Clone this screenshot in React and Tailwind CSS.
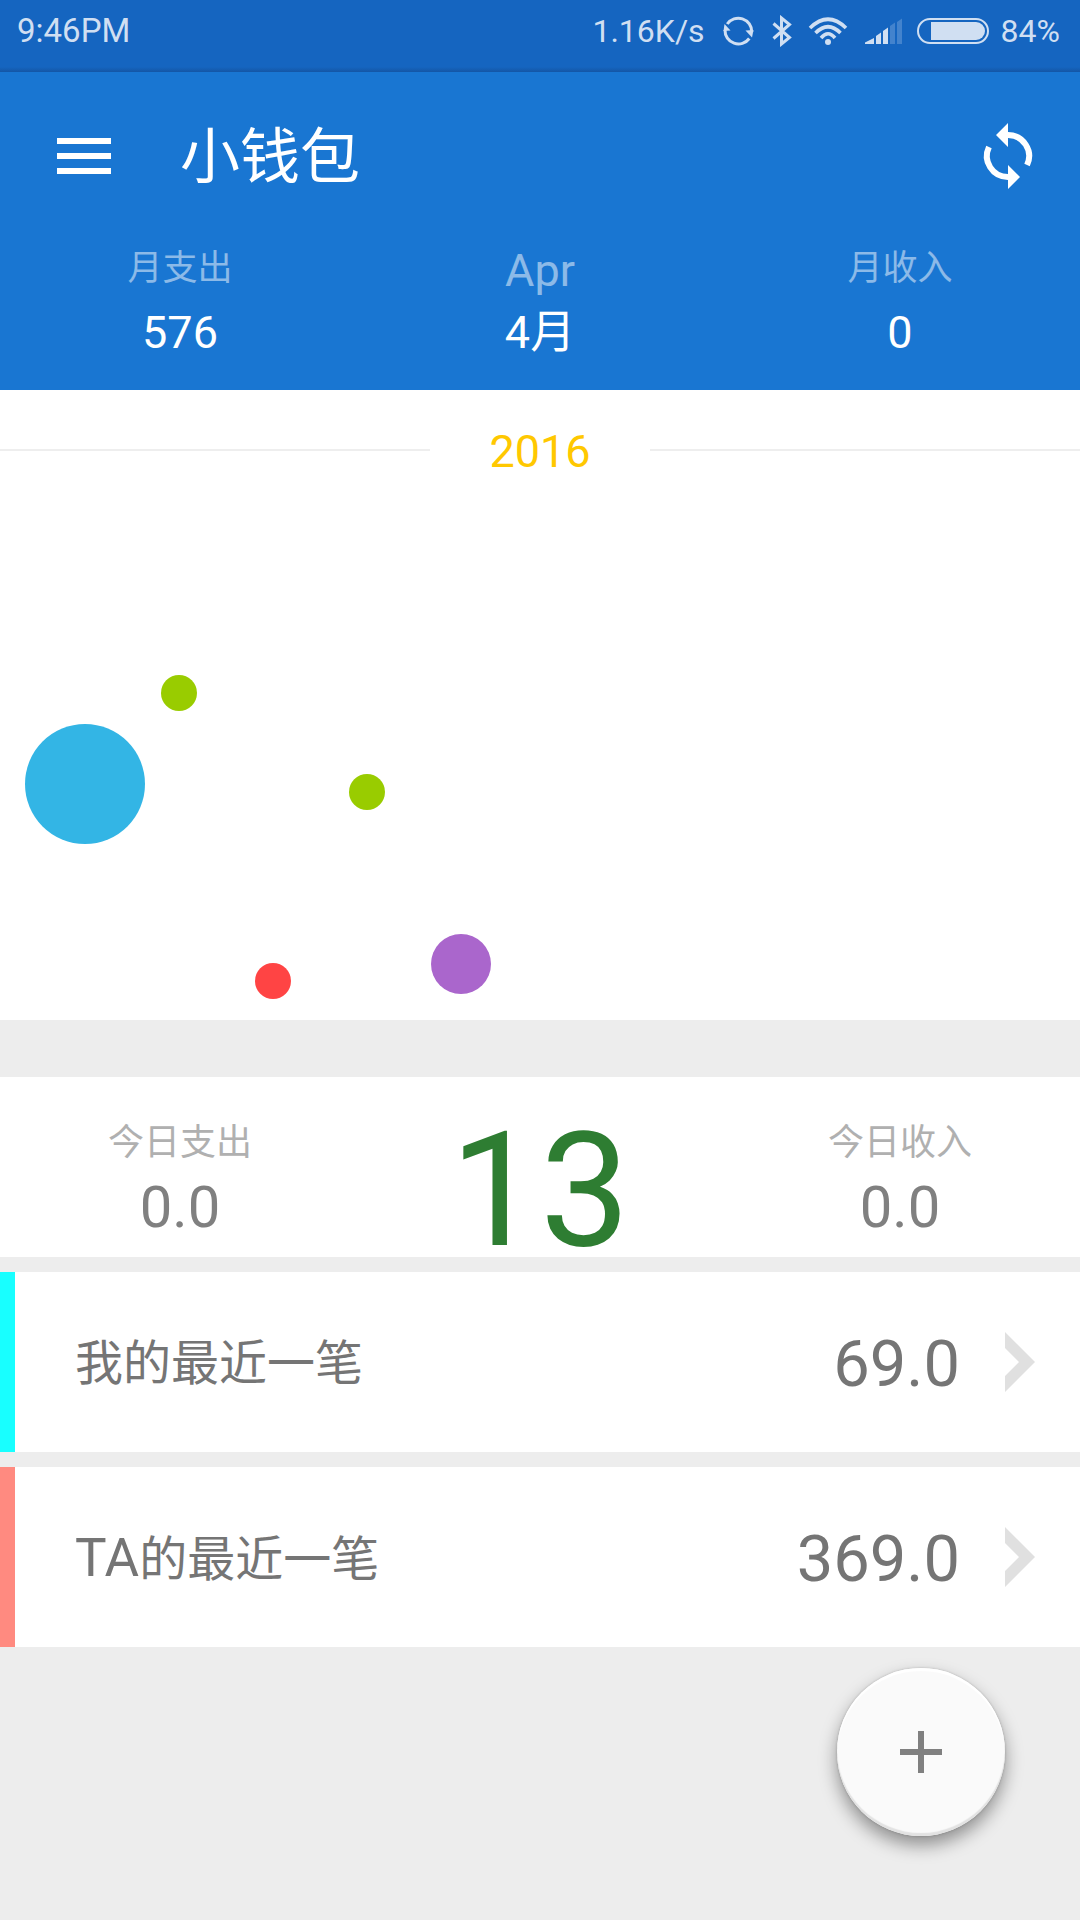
const bubbles = [
  { x: 85, y: 274, r: 60, color: "#33b5e5" },
  { x: 179, y: 183, r: 18, color: "#99cc00" },
  { x: 273, y: 471, r: 18, color: "#ff4444" },
  { x: 367, y: 282, r: 18, color: "#99cc00" },
  { x: 461, y: 454, r: 30, color: "#aa66cc" },
];

const monthStats = [
  { label: "月支出", value: "576", labelClass: "text-[35px]/[54px]" },
  { label: "Apr", value: "4月", labelClass: "text-[45px]/[54px] pt-0.5" },
  { label: "月收入", value: "0", labelClass: "text-[35px]/[54px]" },
];

const records = [
  { owner: "我", ownerClass: "text-5xl/[60px]", amount: "69.0", accent: "bg-[#18ffff]" },
  { owner: "TA", ownerClass: "text-[53px]/[60px]", amount: "369.0", accent: "bg-[#ff8a80]" },
];

function StatusSync() {
  return (
    <svg className="size-8" viewBox="0 0 32 32" fill="none" aria-hidden="true">
      <g stroke="currentColor" strokeWidth="3">
        <path d="M4.200 9A13.500 13.500 0 0 1 28.800 17" />
        <path d="M26.300 23.500A13.500 13.500 0 0 1 2 15" />
      </g>
      <path d="M22.500 15.500L30.500 15L29 22.500z" fill="currentColor" />
      <path d="M7.500 15.500L0.500 16L1.500 9z" fill="currentColor" />
    </svg>
  );
}

function Bluetooth() {
  return (
    <svg className="h-8 w-5" viewBox="0 0 20 32" fill="none" aria-hidden="true">
      <path
        d="M1.500 8.500L17.500 22.500L9.500 29V3L17.500 9.500L1.500 23.500"
        stroke="currentColor"
        strokeWidth="3"
      />
    </svg>
  );
}

function Wifi() {
  return (
    <svg className="h-7 w-10" viewBox="0 0 40 28" fill="none" aria-hidden="true">
      <g stroke="currentColor" strokeWidth="3.600">
        <path d="M2 11Q20 -6.500 38 11" />
        <path d="M7.500 16Q20 3.500 32.500 16" />
        <path d="M13 21Q20 12.500 27 21" />
      </g>
      <circle cx="20" cy="25" r="3" fill="currentColor" />
    </svg>
  );
}

function Signal() {
  return (
    <svg className="h-7 w-[38px]" viewBox="0 0 38 28" fill="currentColor" aria-hidden="true">
      <path d="M0 27v-1.500L9 21v6z" />
      <path d="M11 27v-8l5-3.500V27z" />
      <path d="M18 27V14l5-3.500V27z" />
      <path d="M25 27V9l5-3.500V27z" opacity="0.250" />
      <path d="M32 27V5l5-3.500V27z" opacity="0.250" />
    </svg>
  );
}

function Battery() {
  return (
    <svg className="h-7 w-[72px]" viewBox="0 0 72 28" fill="none" aria-hidden="true">
      <rect x="1" y="2" width="70" height="24" rx="12" stroke="currentColor" strokeWidth="2" />
      <path d="M14 5H59a9 9 0 0 1 0 18H14z" fill="currentColor" />
    </svg>
  );
}

function StatusBar() {
  return (
    <div className="flex h-[72px] items-start justify-between bg-[linear-gradient(to_top,#1456a5,#1565c0_5px)] pt-2.5 pr-5 pl-[17px] text-[33px]/[42px] text-[#d0dff2]">
      <span>9:46PM</span>
      <div className="flex items-center text-[32px]/[42px]">
        <span className="mr-[18px]">1.16K/s</span>
        <span className="mr-[17px]"><StatusSync /></span>
        <span className="mr-4"><Bluetooth /></span>
        <span className="mr-[17px]"><Wifi /></span>
        <span className="mr-3.5"><Signal /></span>
        <span className="mr-3"><Battery /></span>
        <span>84%</span>
      </div>
    </div>
  );
}

function SyncIcon() {
  return (
    <svg className="size-[72px]" viewBox="0 0 24 24" fill="none" aria-hidden="true">
      <g stroke="currentColor" strokeWidth="2">
        <path d="M12 5A7 7 0 0 1 18.350 15" />
        <path d="M12 19A7 7 0 0 1 5.650 9" />
      </g>
      <path d="M12 1v8L8 5zM12 15v8l4-4z" fill="currentColor" />
    </svg>
  );
}

function Header() {
  return (
    <header className="bg-[#1976d2] pb-[30px] text-white">
      <div className="flex h-[168px] items-center pr-9 pl-12">
        <button type="button" aria-label="菜单" className="flex flex-col gap-[9px] p-[9px]">
          <span className="h-1.5 w-[54px] bg-white" />
          <span className="h-1.5 w-[54px] bg-white" />
          <span className="h-1.5 w-[54px] bg-white" />
        </button>
        <h1 className="ml-[60px] flex-1 pt-1 text-6xl/[72px]">小钱包</h1>
        <button type="button" aria-label="同步">
          <SyncIcon />
        </button>
      </div>
      <dl className="grid grid-cols-3 pt-0.5 text-center">
        {monthStats.map((s) => (
          <div key={s.label} className="flex flex-col">
            <dt className={"h-16 text-white/50 " + s.labelClass}>{s.label}</dt>
            <dd className="text-[45px]/[54px]">{s.value}</dd>
          </div>
        ))}
      </dl>
    </header>
  );
}

function TodayStat({ label, value }) {
  return (
    <div className="flex flex-col pt-[38px]">
      <span className="text-4xl/[56px] text-[#b0b0b0]">{label}</span>
      <span className="text-[58px]/[72px] text-[#808080]">{value}</span>
    </div>
  );
}

export default function App() {
  return (
    <div className="min-h-screen bg-[#ededed] font-[Roboto,'Noto_Sans_CJK_SC',sans-serif] font-[380]">
      <StatusBar />
      <Header />
      <main>
        <section className="bg-white">
          <div className="flex h-[120px] items-center">
            <span className="h-0.5 flex-1 bg-[#eeeeee]" />
            <h2 className="w-[220px] pt-1 text-center text-[45px]/[54px] text-[#ffc800]">2016</h2>
            <span className="h-0.5 flex-1 bg-[#eeeeee]" />
          </div>
          <svg className="block h-auto w-full" viewBox="0 0 1080 510" role="img" aria-label="每日支出">
            {bubbles.map((b) => (
              <circle key={b.x} cx={b.x} cy={b.y} r={b.r} fill={b.color} />
            ))}
          </svg>
        </section>

        <section className="mt-[57px] grid h-[180px] grid-cols-3 bg-white text-center">
          <TodayStat label="今日支出" value="0.0" />
          <span className="pt-6 text-[160px]/[180px] text-[#2e7d32]">13</span>
          <TodayStat label="今日收入" value="0.0" />
        </section>

        <ul>
          {records.map((r) => (
            <li key={r.owner} className="mt-[15px]">
              <button type="button" className="flex h-[180px] w-full items-center bg-white pr-[45px] text-left text-[#757575]">
                <span className={"w-[15px] self-stretch " + r.accent} />
                <span className="ml-[60px] flex-1 pt-1 text-5xl/[60px]">
                  <span className={r.ownerClass}>{r.owner}</span>的最近一笔
                </span>
                <span className="mr-[45px] pt-1 text-[65px]/[72px]">{r.amount}</span>
                <svg className="h-[60px] w-[30px]" viewBox="0 0 30 60" aria-hidden="true">
                  <path d="M0 0l30 30L0 60V44l14-14L0 16z" fill="#e0e0e0" />
                </svg>
              </button>
            </li>
          ))}
        </ul>
      </main>

      <button
        type="button"
        aria-label="添加"
        className="fixed right-[75px] bottom-[84px] flex size-[168px] items-center justify-center rounded-full bg-[#fafafa] shadow-[inset_0_3px_1px_#ffffff,inset_0_-3px_1px_#e2e2e2,0_0_3px_rgba(0,0,0,0.2),0_9px_18px_rgba(0,0,0,0.4)]"
      >
        <svg className="size-[42px]" viewBox="0 0 42 42" aria-hidden="true">
          <path d="M18 0h6v18h18v6H24v18h-6V24H0v-6h18z" fill="#808080" />
        </svg>
      </button>
    </div>
  );
}
